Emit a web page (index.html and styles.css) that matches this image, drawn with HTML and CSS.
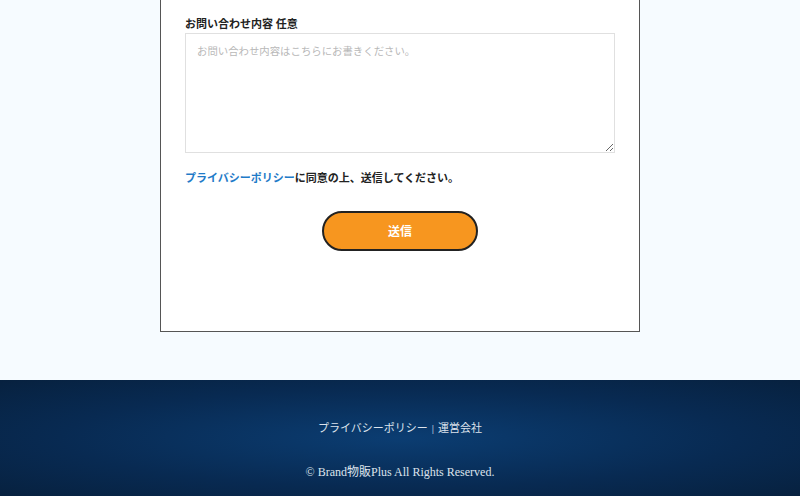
FILE: index.html
```html
<!DOCTYPE html>
<html lang="ja">
<head>
    <meta charset="UTF-8">
    <meta name="viewport" content="width=device-width, initial-scale=1.0">
    <title>お問い合わせ | Brand物販Plus</title>
    <link rel="stylesheet" href="styles.css">
</head>
<body>
    <main class="contact">
        <form class="contact-card" onsubmit="return false">
            <div class="form-group">
                <label for="message">お問い合わせ内容 任意</label>
                <textarea id="message" name="message" placeholder="お問い合わせ内容はこちらにお書きください。"></textarea>
            </div>

            <p class="agree"><a href="#">プライバシーポリシー</a>に同意の上、送信してください。</p>

            <div class="submit-row">
                <button type="submit" class="submit-btn">送信</button>
            </div>
        </form>
    </main>

    <footer class="site-footer">
        <nav class="footer-links"><a href="#">プライバシーポリシー</a><span class="sep">|</span><a href="#">運営会社</a></nav>
        <p class="copyright">© Brand物販Plus All Rights Reserved.</p>
    </footer>
</body>
</html>
```

FILE: styles.css
```css
body {
    margin: 0;
    background: #f6fbff;
    font-family: "Liberation Serif", "Noto Sans CJK JP", serif;
    color: #222;
}

.contact {
    padding-bottom: 48px;
}

.contact-card {
    box-sizing: border-box;
    width: 480px;
    margin: 0 auto;
    padding: 15px 24px 80px;
    background: #fff;
    border: 1px solid #555;
    border-top: none;
}

.form-group label {
    display: block;
    font-size: 11px;
    font-weight: 700;
    line-height: 18px;
}

.form-group textarea {
    display: block;
    box-sizing: border-box;
    width: 100%;
    height: 120px;
    padding: 9px 11px;
    border: 1px solid #e0e0e0;
    border-radius: 0;
    font-family: inherit;
    font-size: 10.4px;
    resize: vertical;
}

.form-group textarea::placeholder {
    color: #b8b8b8;
}

.agree {
    margin: 15px 0 0;
    font-size: 11px;
    font-weight: 700;
    line-height: 20px;
}

.agree a {
    color: #1f7bc8;
    text-decoration: none;
}

.submit-row {
    display: flex;
    justify-content: center;
    margin-top: 23px;
}

.submit-btn {
    box-sizing: border-box;
    width: 156px;
    height: 40px;
    background: #f7961f;
    color: #fff;
    border: 2px solid #222;
    border-radius: 20px;
    font-family: inherit;
    font-size: 12px;
    font-weight: 700;
    cursor: pointer;
}

.site-footer {
    height: 116px;
    box-sizing: border-box;
    padding-top: 39px;
    background: radial-gradient(ellipse at center, #0b3d72 0%, #082a52 60%, #07213f 100%);
    text-align: center;
    color: #dde3ec;
}

.footer-links {
    font-size: 11px;
    line-height: 18px;
}

.footer-links a {
    color: #dde3ec;
    text-decoration: none;
}

.footer-links .sep {
    margin: 0 4px;
}

.copyright {
    margin: 26px 0 0;
    font-size: 12px;
    line-height: 18px;
}
```
